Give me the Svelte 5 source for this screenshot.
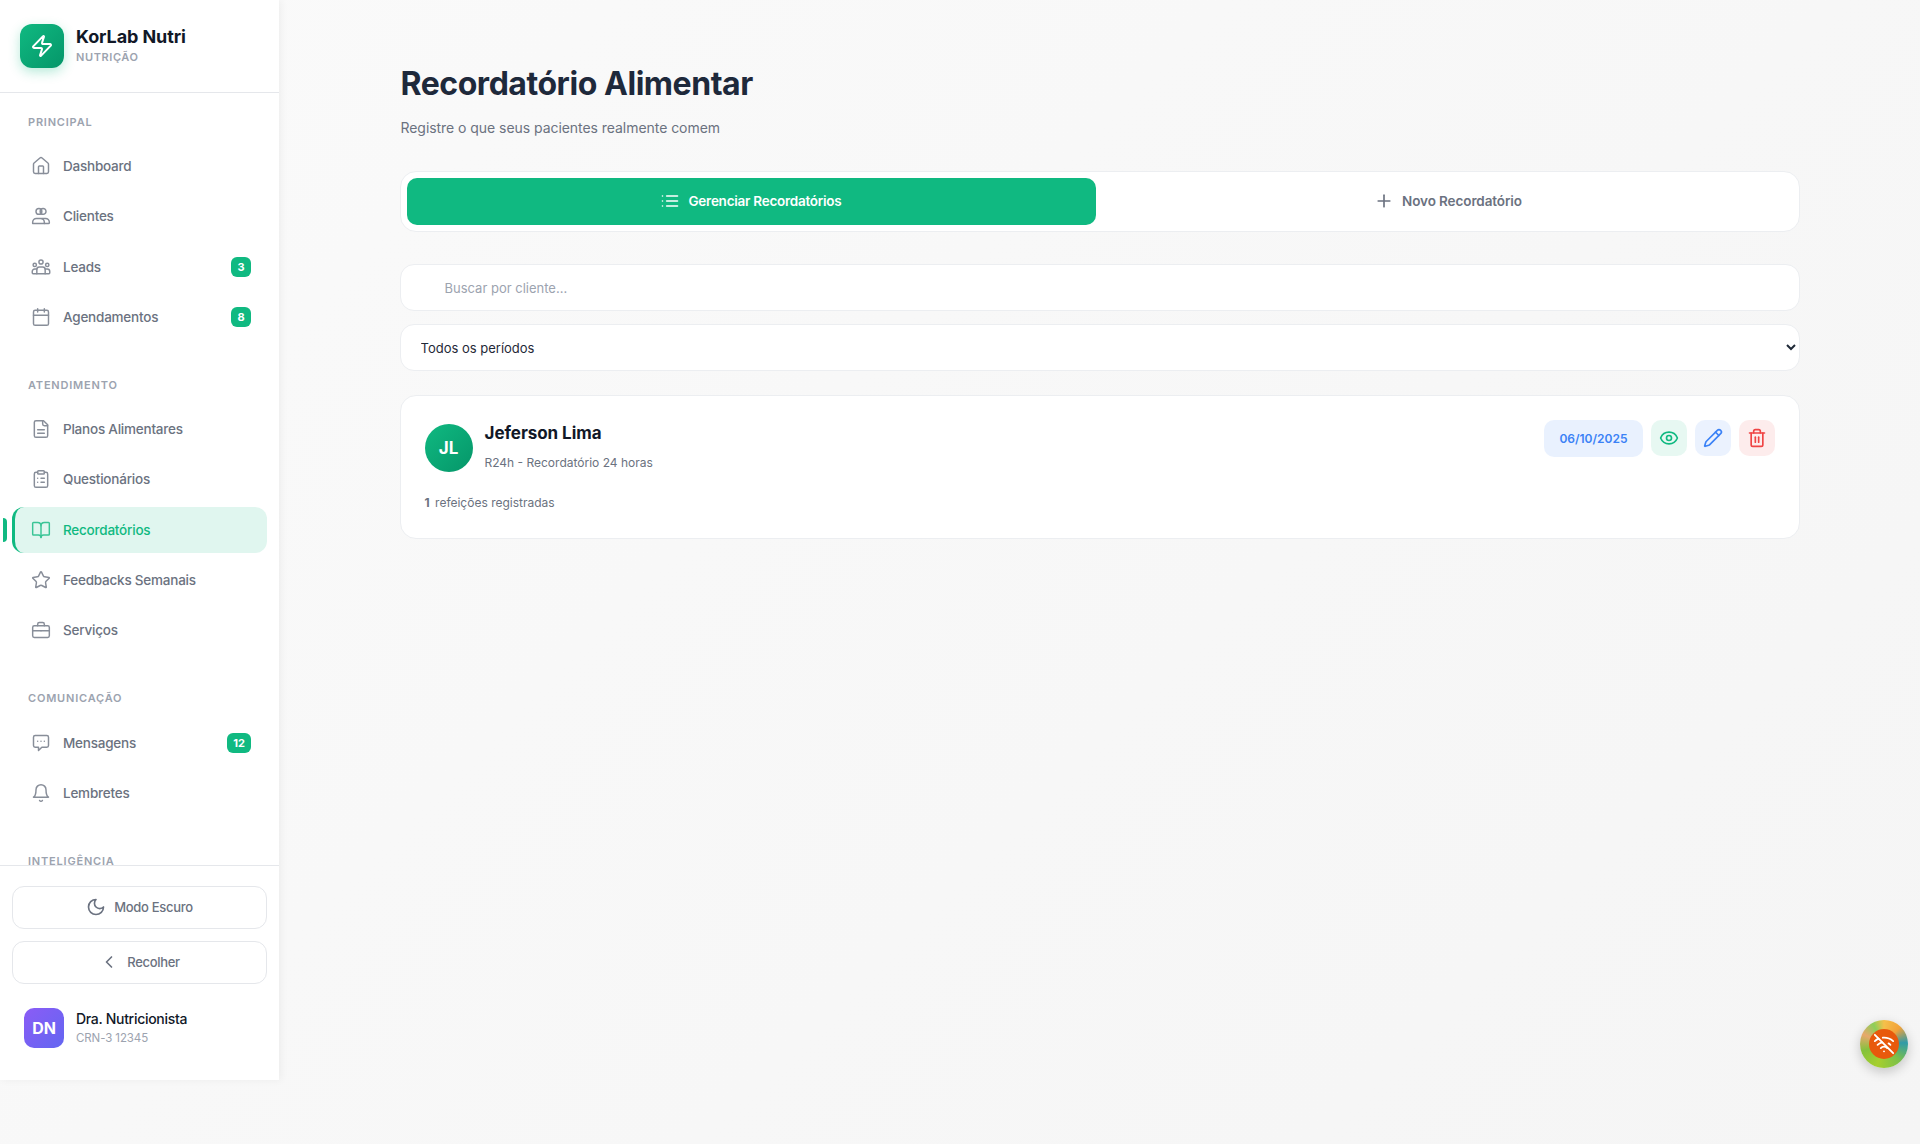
<script>
  const icons = {
    home: ['M15 21v-8a1 1 0 0 0-1-1h-4a1 1 0 0 0-1 1v8', 'M3 10a2 2 0 0 1 .709-1.528l7-5.999a2 2 0 0 1 2.582 0l7 5.999A2 2 0 0 1 21 10v9a2 2 0 0 1-2 2H5a2 2 0 0 1-2-2z'],
    users: ['M6 6.500a3.500 3.500 0 1 0 7 0a3.500 3.500 0 1 0-7 0', 'M11 6.500a3.500 3.500 0 1 0 7 0a3.500 3.500 0 1 0-7 0', 'M2 21v-1.500a4.500 4.500 0 0 1 4.500-4.500h5a4.500 4.500 0 0 1 4.500 4.500V21z', 'M13 15h4.500a4.500 4.500 0 0 1 4.500 4.500V20a1 1 0 0 1-1 1h-5'],
    leads: ['M9.500 6a2.500 2.500 0 1 0 5 0a2.500 2.500 0 1 0-5 0', 'M2.500 9.500a2 2 0 1 0 4 0a2 2 0 1 0-4 0', 'M17.500 9.500a2 2 0 1 0 4 0a2 2 0 1 0-4 0', 'M7 20v-5a3 3 0 0 1 3-3h4a3 3 0 0 1 3 3v5z', 'M7 20H2.500a1 1 0 0 1-1-1v-1.500a3 3 0 0 1 3-3H7', 'M17 20h4.500a1 1 0 0 0 1-1v-1.500a3 3 0 0 0-3-3H17'],
    calendar: ['M8 2v4', 'M16 2v4', 'M5 4h14a2 2 0 0 1 2 2v14a2 2 0 0 1-2 2H5a2 2 0 0 1-2-2V6a2 2 0 0 1 2-2z', 'M3 10h18'],
    file: ['M15 2H6a2 2 0 0 0-2 2v16a2 2 0 0 0 2 2h12a2 2 0 0 0 2-2V7Z', 'M14 2v4a2 2 0 0 0 2 2h4', 'M16 13H8', 'M16 17H8'],
    clipboard: ['M9 2h6a1 1 0 0 1 1 1v2a1 1 0 0 1-1 1H9a1 1 0 0 1-1-1V3a1 1 0 0 1 1-1z', 'M16 4h2a2 2 0 0 1 2 2v14a2 2 0 0 1-2 2H6a2 2 0 0 1-2-2V6a2 2 0 0 1 2-2h2', 'M12 11h4', 'M12 16h4', 'M8 11h.01', 'M8 16h.01'],
    book: ['M12 7v14', 'M3 18a1 1 0 0 1-1-1V4a1 1 0 0 1 1-1h5a4 4 0 0 1 4 4 4 4 0 0 1 4-4h5a1 1 0 0 1 1 1v13a1 1 0 0 1-1 1h-6a3 3 0 0 0-3 3 3 3 0 0 0-3-3z'],
    star: ['M11.525 2.295a.53.53 0 0 1 .95 0l2.31 4.679a2.123 2.123 0 0 0 1.595 1.16l5.166.756a.53.53 0 0 1 .294.904l-3.736 3.638a2.123 2.123 0 0 0-.611 1.878l.882 5.14a.53.53 0 0 1-.771.56l-4.618-2.428a2.122 2.122 0 0 0-1.973 0L6.396 21.01a.53.53 0 0 1-.77-.56l.881-5.139a2.122 2.122 0 0 0-.611-1.879L2.16 9.795a.53.53 0 0 1 .294-.906l5.165-.755a2.122 2.122 0 0 0 1.597-1.16z'],
    briefcase: ['M8 7V5a2 2 0 0 1 2-2h4a2 2 0 0 1 2 2v2', 'M4 7h16a2 2 0 0 1 2 2v10a2 2 0 0 1-2 2H4a2 2 0 0 1-2-2V9a2 2 0 0 1 2-2z', 'M2 13h20', 'M12 13h.01'],
    message: ['M5 3h14a2 2 0 0 1 2 2v10a2 2 0 0 1-2 2h-6l-4 4v-4H5a2 2 0 0 1-2-2V5a2 2 0 0 1 2-2z', 'M8 10h.01', 'M12 10h.01', 'M16 10h.01'],
    bell: ['M6 8a6 6 0 0 1 12 0c0 7 3 9 3 9H3s3-2 3-9', 'M10.3 21a1.94 1.94 0 0 0 3.4 0'],
    moon: ['M12 3a6 6 0 0 0 9 9 9 9 0 1 1-9-9Z'],
    chevron: ['m15 18-6-6 6-6'],
    zap: ['M4 14a1 1 0 0 1-.78-1.63l9.9-10.2a.5.5 0 0 1 .86.46l-1.92 6.02A1 1 0 0 0 13 10h7a1 1 0 0 1 .78 1.63l-9.9 10.2a.5.5 0 0 1-.86-.46l1.92-6.02A1 1 0 0 0 11 14z'],
    list: ['M3 12h.01', 'M3 18h.01', 'M3 6h.01', 'M8 12h13', 'M8 18h13', 'M8 6h13'],
    plus: ['M5 12h14', 'M12 5v14'],
    eye: ['M2.062 12.348a1 1 0 0 1 0-.696 10.75 10.75 0 0 1 19.876 0 1 1 0 0 1 0 .696 10.75 10.75 0 0 1-19.876 0', 'M9 12a3 3 0 1 0 6 0a3 3 0 1 0-6 0'],
    pencil: ['M21.174 6.812a1 1 0 0 0-3.986-3.987L3.842 16.174a2 2 0 0 0-.5.83l-1.321 4.352a.5.5 0 0 0 .623.622l4.353-1.32a2 2 0 0 0 .83-.497z', 'm15 5 4 4'],
    trash: ['M3 6h18', 'M19 6v14c0 1-1 2-2 2H7c-1 0-2-1-2-2V6', 'M8 6V4c0-1 1-2 2-2h4c1 0 2 1 2 2v2', 'M10 11v6', 'M14 11v6'],
    wifiOff: ['M12 20h.01', 'M8.5 16.429a5 5 0 0 1 7 0', 'M5 12.859a10 10 0 0 1 5.17-2.69', 'M19 12.859a10 10 0 0 0-2.007-1.523', 'M2 8.82a15 15 0 0 1 4.177-2.643', 'M22 8.82a15 15 0 0 0-11.288-3.764', 'm2 2 20 20']
  };

  const sections = [
    { title: 'Principal', items: [
      { label: 'Dashboard', icon: 'home' },
      { label: 'Clientes', icon: 'users' },
      { label: 'Leads', icon: 'leads', badge: 3 },
      { label: 'Agendamentos', icon: 'calendar', badge: 8 }
    ] },
    { title: 'Atendimento', items: [
      { label: 'Planos Alimentares', icon: 'file' },
      { label: 'Questionários', icon: 'clipboard' },
      { label: 'Recordatórios', icon: 'book', active: true },
      { label: 'Feedbacks Semanais', icon: 'star' },
      { label: 'Serviços', icon: 'briefcase' }
    ] },
    { title: 'Comunicação', items: [
      { label: 'Mensagens', icon: 'message', badge: 12 },
      { label: 'Lembretes', icon: 'bell' }
    ] },
    { title: 'Inteligência', items: [] }
  ];
</script>

{#snippet icon(name, size)}
  <svg width={size} height={size} viewBox="0 0 24 24" fill="none" stroke="currentColor" stroke-width="2" stroke-linecap="round" stroke-linejoin="round">
    {#each icons[name] as d}<path {d} />{/each}
  </svg>
{/snippet}

<div class="page">
  <aside class="sidebar">
    <div class="brand">
      <div class="logo">{@render icon('zap', 24)}</div>
      <div>
        <div class="brand-name">KorLab Nutri</div>
        <div class="brand-sub">NUTRIÇÃO</div>
      </div>
    </div>

    <nav class="nav">
      {#each sections as section}
        <div class="section">
          <div class="section-title">{section.title}</div>
          {#each section.items as item}
            <div class="nav-item" class:active={item.active}>
              <span class="nav-icon">{@render icon(item.icon, 20)}</span>
              <span class="nav-label">{item.label}</span>
              {#if item.badge}<span class="badge">{item.badge}</span>{/if}
            </div>
          {/each}
        </div>
      {/each}
    </nav>

    <div class="side-footer">
      <button class="side-btn">{@render icon('moon', 20)} Modo Escuro</button>
      <button class="side-btn">{@render icon('chevron', 20)} Recolher</button>
      <div class="user">
        <div class="user-avatar">DN</div>
        <div>
          <div class="user-name">Dra. Nutricionista</div>
          <div class="user-crn">CRN-3 12345</div>
        </div>
      </div>
    </div>
  </aside>

  <main class="main">
    <div class="content">
      <h1>Recordatório Alimentar</h1>
      <p class="subtitle">Registre o que seus pacientes realmente comem</p>

      <div class="tabs">
        <button class="tab tab-active">{@render icon('list', 20)} Gerenciar Recordatórios</button>
        <button class="tab">{@render icon('plus', 20)} Novo Recordatório</button>
      </div>

      <input class="search" type="text" placeholder="Buscar por cliente..." />
      <select class="period">
        <option>Todos os períodos</option>
      </select>

      <div class="card">
        <div class="card-top">
          <div class="client">
            <div class="client-avatar">JL</div>
            <div>
              <div class="client-name">Jeferson Lima</div>
              <div class="client-type">R24h - Recordatório 24 horas</div>
            </div>
          </div>
          <div class="actions">
            <span class="date">06/10/2025</span>
            <button class="act act-green">{@render icon('eye', 20)}</button>
            <button class="act act-blue">{@render icon('pencil', 20)}</button>
            <button class="act act-red">{@render icon('trash', 20)}</button>
          </div>
        </div>
        <div class="meals"><strong>1</strong> refeições registradas</div>
      </div>
    </div>
  </main>

  <div class="float">
    <div class="float-inner">{@render icon('wifiOff', 22)}</div>
  </div>
</div>

<style>
  :global(body) {
    margin: 0;
    font-family: Inter, 'Noto Sans', sans-serif;
  }

  button, input, select {
    font-family: inherit;
  }

  svg {
    display: block;
    flex-shrink: 0;
  }

  .page {
    position: relative;
    display: flex;
    align-items: flex-start;
    min-height: 1144px;
    background: linear-gradient(135deg, #fafafa, #f5f5f5);
  }

  .sidebar {
    display: flex;
    flex-direction: column;
    flex-shrink: 0;
    width: 279px;
    height: 1080px;
    background: #fff;
    box-shadow: 2px 0 8px rgba(0, 0, 0, 0.05);
  }

  .brand {
    display: flex;
    align-items: center;
    gap: 12px;
    height: 93px;
    padding: 0 20px 1px;
    box-sizing: border-box;
    border-bottom: 1px solid #e5e7eb;
    flex-shrink: 0;
  }

  .logo {
    display: flex;
    align-items: center;
    justify-content: center;
    width: 44px;
    height: 44px;
    border-radius: 12px;
    color: #fff;
    background: linear-gradient(135deg, #10b981, #059669);
    box-shadow: 0 4px 12px rgba(16, 185, 129, 0.3);
  }

  .brand-name {
    font-size: 18px;
    font-weight: 700;
    line-height: 24px;
    letter-spacing: -0.1px;
    color: #111827;
    margin-top: -3px;
  }

  .brand-sub {
    font-size: 11px;
    font-weight: 600;
    line-height: 14px;
    margin-top: 1px;
    letter-spacing: 0.6px;
    color: #9ca3af;
  }

  .nav {
    flex: 1;
    min-height: 0;
    overflow: hidden;
    padding: 19px 12px 0;
  }

  .section {
    margin-bottom: 35px;
  }

  .section-title {
    padding: 0 16px;
    height: 20px;
    font-size: 11px;
    font-weight: 600;
    line-height: 20px;
    letter-spacing: 0.8px;
    text-transform: uppercase;
    color: #9ca3af;
    margin-bottom: 11px;
  }

  .nav-item {
    position: relative;
    display: flex;
    align-items: center;
    gap: 12px;
    height: 46.27px;
    margin-bottom: 4px;
    padding: 0 16px 0 19px;
    box-sizing: border-box;
    border-radius: 12px;
    font-size: 13.5px;
    font-weight: 500;
    letter-spacing: -0.22px;
    color: #6b7280;
  }

  .nav-item.active {
    color: #10b981;
    background: rgba(16, 185, 129, 0.13);
    border-left: 3px solid #10b981;
    padding-left: 16px;
  }

  .nav-item.active::before {
    content: '';
    position: absolute;
    left: -12px;
    top: 11px;
    width: 4px;
    height: 24px;
    border-radius: 0 4px 4px 0;
    background: #10b981;
  }

  .nav-icon {
    display: flex;
    width: 20px;
    justify-content: center;
    opacity: 0.8;
  }

  .nav-icon svg {
    stroke-width: 1.75;
  }

  .nav-label {
    flex: 1;
  }

  .badge {
    display: flex;
    align-items: center;
    justify-content: center;
    min-width: 20px;
    height: 20px;
    padding: 0 6px;
    box-sizing: border-box;
    border-radius: 6px;
    font-size: 11px;
    font-weight: 700;
    letter-spacing: 0;
    color: #fff;
    background: #10b981;
  }

  .side-footer {
    flex-shrink: 0;
    height: 215px;
    padding: 20px 12px 0;
    box-sizing: border-box;
    border-top: 1px solid #e5e7eb;
  }

  .side-btn {
    display: flex;
    align-items: center;
    justify-content: center;
    gap: 8px;
    width: 100%;
    height: 43px;
    margin-bottom: 12px;
    padding: 0 6px 1px;
    border: 1px solid #e5e7eb;
    border-radius: 12px;
    background: #fff;
    font-size: 13px;
    font-weight: 500;
    letter-spacing: -0.3px;
    color: #6b7280;
  }

  .user {
    display: flex;
    align-items: center;
    gap: 12px;
    padding: 12px 12px 0;
  }

  .user-avatar {
    display: flex;
    align-items: center;
    justify-content: center;
    width: 40px;
    height: 40px;
    border-radius: 10px;
    background: linear-gradient(135deg, #8b5cf6, #6366f1);
    color: #fff;
    font-size: 16px;
    font-weight: 700;
  }

  .user-name {
    font-size: 14px;
    font-weight: 500;
    line-height: 18px;
    letter-spacing: -0.3px;
    color: #111827;
  }

  .user-crn {
    font-size: 11.5px;
    line-height: 18px;
    margin-top: 1px;
    letter-spacing: -0.1px;
    color: #9ca3af;
  }

  .main {
    flex: 1;
    min-width: 0;
    padding: 0 120px;
  }

  .content {
    width: 1400px;
    margin: 0 auto;
  }

  h1 {
    margin: 0;
    padding-top: 63px;
    padding-left: 1px;
    font-size: 32px;
    font-weight: 700;
    line-height: 42px;
    letter-spacing: -0.45px;
    color: #1e293b;
  }

  .subtitle {
    margin: 12px 0 0;
    padding-left: 1px;
    font-size: 14px;
    line-height: 22px;
    letter-spacing: -0.05px;
    color: #6b7280;
  }

  .tabs {
    display: flex;
    gap: 8px;
    margin-top: 32px;
    padding: 6px;
    background: #fff;
    border: 1px solid #eceef1;
    border-radius: 16px;
  }

  .tab {
    flex: 1;
    display: flex;
    align-items: center;
    justify-content: center;
    gap: 8px;
    height: 47px;
    padding: 0 6px 1px;
    border: 0;
    border-radius: 10px;
    background: transparent;
    font-size: 13.5px;
    font-weight: 600;
    letter-spacing: -0.1px;
    color: #6b7280;
  }

  .tab-active {
    background: #10b981;
    color: #fff;
    letter-spacing: -0.25px;
  }

  .search,
  .period {
    display: block;
    width: 100%;
    box-sizing: border-box;
    border: 1px solid #eceef1;
    border-radius: 14px;
    background: #fff;
    font-size: 13px;
    outline: none;
  }

  .search {
    height: 47px;
    margin-top: 32px;
    padding: 0 16px 0 44px;
  }

  .search::placeholder {
    color: #9ca3af;
  }

  .period {
    height: 47px;
    margin-top: 13px;
    padding: 0 16px;
    color: #1f2937;
  }

  .card {
    margin-top: 24px;
    height: 144px;
    padding: 24px;
    box-sizing: border-box;
    background: #fff;
    border: 1px solid #eceef1;
    border-radius: 16px;
  }

  .card-top {
    display: flex;
    justify-content: space-between;
    align-items: flex-start;
  }

  .client {
    display: flex;
    align-items: center;
    gap: 12px;
    padding-top: 3px;
  }

  .client-avatar {
    display: flex;
    align-items: center;
    justify-content: center;
    width: 48px;
    height: 48px;
    border-radius: 50%;
    background: linear-gradient(135deg, #10b981, #059669);
    color: #fff;
    font-size: 17px;
    font-weight: 700;
  }

  .client-name {
    margin-top: -2px;
    font-size: 17px;
    font-weight: 700;
    line-height: 24px;
    letter-spacing: -0.05px;
    color: #111827;
  }

  .client-type {
    margin-top: 9px;
    font-size: 12px;
    line-height: 18px;
    color: #6b7280;
  }

  .actions {
    display: flex;
    align-items: flex-start;
    gap: 8px;
  }

  .date {
    padding: 0 15px;
    height: 37px;
    line-height: 37px;
    border-radius: 10px;
    background: rgba(59, 130, 246, 0.11);
    font-size: 12px;
    font-weight: 600;
    color: #3b82f6;
  }

  .act {
    display: flex;
    align-items: center;
    justify-content: center;
    width: 36px;
    height: 36px;
    padding: 0;
    border: 0;
    border-radius: 10px;
  }

  .act-green { background: rgba(16, 185, 129, 0.1); color: #10b981; }
  .act-blue { background: rgba(59, 130, 246, 0.1); color: #3b82f6; }
  .act-red { background: rgba(239, 68, 68, 0.1); color: #ef4444; }

  .meals {
    margin-top: 22px;
    font-size: 12px;
    line-height: 18px;
    color: #6b7280;
  }

  .meals strong {
    font-weight: 700;
    margin-right: 2px;
  }

  .float {
    position: absolute;
    left: 1860px;
    top: 1020px;
    width: 48px;
    height: 48px;
    border-radius: 50%;
    display: flex;
    align-items: center;
    justify-content: center;
    background: conic-gradient(#f5c04a, #f2a23a 12%, #2f9aa8 24%, #7cc04a 38%, #a6cf2e 55%, #84c23c 70%, #e8a86c 82%, #8ccf5a 92%, #f5c04a);
    box-shadow: 0 4px 12px rgba(0, 0, 0, 0.2);
  }

  .float-inner {
    display: flex;
    align-items: center;
    justify-content: center;
    width: 30px;
    height: 30px;
    border-radius: 50%;
    background: #e8590c;
    color: #fff;
  }
</style>
